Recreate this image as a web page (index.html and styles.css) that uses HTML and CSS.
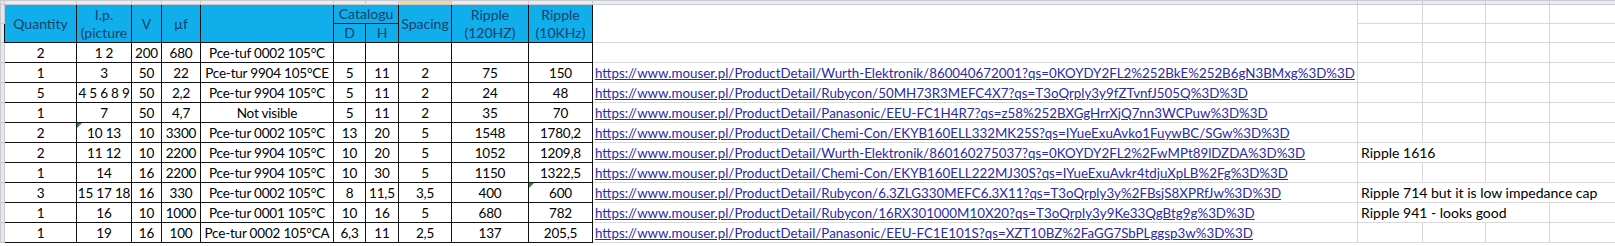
FILE: index.html
```html
<!DOCTYPE html>
<html>
<head>
<meta charset="utf-8">
<link rel="stylesheet" href="styles.css">
</head>
<body>
<table class="sheet">
<colgroup>
<col class="w-g"><col class="w-q"><col class="w-ip"><col class="w-v"><col class="w-uf"><col class="w-desc"><col class="w-d"><col class="w-h"><col class="w-sp"><col class="w-r1"><col class="w-r2"><col class="w-link"><col class="w-n1"><col class="w-n2"><col class="w-n3"><col class="w-n4">
</colgroup>
<tr class="r-top">
<td class="gut"></td><td class="ch"></td><td class="ch"></td><td class="ch"></td><td class="ch"></td><td class="ch"></td><td class="ch"></td><td class="ch"></td><td class="ch sel"></td><td class="ch"></td><td class="ch"></td><td class="ch"></td><td class="ch"></td><td class="ch"></td><td class="ch"></td><td class="ch"></td>
</tr>
<tr class="r-h">
<td class="gut"></td>
<td class="hd" rowspan="2">Quantity</td>
<td class="hd two" rowspan="2">I.p.<br>(picture</td>
<td class="hd" rowspan="2">V</td>
<td class="hd" rowspan="2">µf</td>
<td class="hd" rowspan="2"></td>
<td class="hd" colspan="2">Catalogu</td>
<td class="hd" rowspan="2">Spacing</td>
<td class="hd two" rowspan="2">Ripple<br>(120HZ)</td>
<td class="hd two" rowspan="2">Ripple<br>(10KHz)</td>
<td class="plain hl" rowspan="2"></td>
<td class="plain"></td><td class="plain"></td><td class="plain"></td><td class="plain"></td>
</tr>
<tr class="r-h">
<td class="gut"></td>
<td class="hd">D</td>
<td class="hd">H</td>
<td class="plain"></td><td class="plain"></td><td class="plain"></td><td class="plain"></td>
</tr>
<tr class="r">
<td class="gut"></td><td class="c">2</td><td class="c">1 2</td><td class="c">200</td><td class="c">680</td><td class="c">Pce-tuf 0002 105°C</td><td class="c"></td><td class="c"></td><td class="c"></td><td class="c"></td><td class="c"></td><td class="plain hl"></td><td class="plain"></td><td class="plain"></td><td class="plain"></td><td class="plain"></td>
</tr>
<tr class="r">
<td class="gut"></td><td class="c">1</td><td class="c">3</td><td class="c">50</td><td class="c">22</td><td class="c">Pce-tur 9904 105°CE</td><td class="c">5</td><td class="c">11</td><td class="c">2</td><td class="c">75</td><td class="c">150</td><td class="plain lk"><a href="#">https://www.mouser.pl/ProductDetail/Wurth-Elektronik/860040672001?qs=0KOYDY2FL2%252BkE%252B6gN3BMxg%3D%3D</a></td><td class="plain"></td><td class="plain"></td><td class="plain"></td><td class="plain"></td>
</tr>
<tr class="r">
<td class="gut"></td><td class="c">5</td><td class="c">4 5 6 8 9</td><td class="c">50</td><td class="c">2,2</td><td class="c">Pce-tur 9904 105°C</td><td class="c">5</td><td class="c">11</td><td class="c">2</td><td class="c">24</td><td class="c">48</td><td class="plain lk"><a href="#">https://www.mouser.pl/ProductDetail/Rubycon/50MH73R3MEFC4X7?qs=T3oQrply3y9fZTvnfJ505Q%3D%3D</a></td><td class="plain"></td><td class="plain"></td><td class="plain"></td><td class="plain"></td>
</tr>
<tr class="r">
<td class="gut"></td><td class="c">1</td><td class="c">7</td><td class="c">50</td><td class="c">4,7</td><td class="c">Not visible</td><td class="c">5</td><td class="c">11</td><td class="c">2</td><td class="c">35</td><td class="c">70</td><td class="plain lk"><a href="#">https://www.mouser.pl/ProductDetail/Panasonic/EEU-FC1H4R7?qs=z58%252BXGgHrrXjQ7nn3WCPuw%3D%3D</a></td><td class="plain"></td><td class="plain"></td><td class="plain"></td><td class="plain"></td>
</tr>
<tr class="r">
<td class="gut"></td><td class="c">2</td><td class="c tri">10 13</td><td class="c">10</td><td class="c">3300</td><td class="c">Pce-tur 0002 105°C</td><td class="c">13</td><td class="c">20</td><td class="c">5</td><td class="c">1548</td><td class="c">1780,2</td><td class="plain lk"><a href="#">https://www.mouser.pl/ProductDetail/Chemi-Con/EKYB160ELL332MK25S?qs=IYueExuAvko1FuywBC/SGw%3D%3D</a></td><td class="plain"></td><td class="plain"></td><td class="plain"></td><td class="plain"></td>
</tr>
<tr class="r">
<td class="gut"></td><td class="c">2</td><td class="c">11 12</td><td class="c">10</td><td class="c">2200</td><td class="c">Pce-tur 9904 105°C</td><td class="c">10</td><td class="c">20</td><td class="c">5</td><td class="c">1052</td><td class="c">1209,8</td><td class="plain lk"><a href="#">https://www.mouser.pl/ProductDetail/Wurth-Elektronik/860160275037?qs=0KOYDY2FL2%2FwMPt89lDZDA%3D%3D</a></td><td class="plain note" colspan="2">Ripple 1616</td><td class="plain"></td><td class="plain"></td>
</tr>
<tr class="r">
<td class="gut"></td><td class="c">1</td><td class="c">14</td><td class="c">16</td><td class="c">2200</td><td class="c">Pce-tur 9904 105°C</td><td class="c">10</td><td class="c">30</td><td class="c">5</td><td class="c">1150</td><td class="c">1322,5</td><td class="plain lk"><a href="#">https://www.mouser.pl/ProductDetail/Chemi-Con/EKYB160ELL222MJ30S?qs=IYueExuAvkr4tdjuXpLB%2Fg%3D%3D</a></td><td class="plain"></td><td class="plain"></td><td class="plain"></td><td class="plain"></td>
</tr>
<tr class="r">
<td class="gut"></td><td class="c">3</td><td class="c">15 17 18</td><td class="c">16</td><td class="c">330</td><td class="c">Pce-tur 0002 105°C</td><td class="c">8</td><td class="c">11,5</td><td class="c">3,5</td><td class="c">400</td><td class="c tri">600</td><td class="plain lk"><a href="#">https://www.mouser.pl/ProductDetail/Rubycon/6.3ZLG330MEFC6.3X11?qs=T3oQrply3y%2FBsjS8XPRfJw%3D%3D</a></td><td class="plain note" colspan="4">Ripple 714 but it is low impedance cap</td>
</tr>
<tr class="r">
<td class="gut"></td><td class="c">1</td><td class="c">16</td><td class="c">10</td><td class="c">1000</td><td class="c">Pce-tur 0001 105°C</td><td class="c">10</td><td class="c">16</td><td class="c">5</td><td class="c">680</td><td class="c">782</td><td class="plain lk"><a href="#">https://www.mouser.pl/ProductDetail/Rubycon/16RX301000M10X20?qs=T3oQrply3y9Ke33QgBtg9g%3D%3D</a></td><td class="plain note" colspan="3">Ripple 941 - looks good</td><td class="plain"></td>
</tr>
<tr class="r">
<td class="gut"></td><td class="c">1</td><td class="c">19</td><td class="c">16</td><td class="c">100</td><td class="c">Pce-tur 0002 105°CA</td><td class="c">6,3</td><td class="c">11</td><td class="c">2,5</td><td class="c">137</td><td class="c">205,5</td><td class="plain lk"><a href="#">https://www.mouser.pl/ProductDetail/Panasonic/EEU-FC1E101S?qs=XZT10BZ%2FaGG7SbPLggsp3w%3D%3D</a></td><td class="plain"></td><td class="plain"></td><td class="plain"></td><td class="plain"></td>
</tr>
</table>
</body>
</html>
```
FILE: styles.css
```css
html, body {
  margin: 0;
  padding: 0;
  background: #ffffff;
}
body {
  width: 1615px;
  height: 246px;
  overflow: hidden;
  font-family: Lato, "Liberation Sans", sans-serif;
  font-size: 14px;
  color: #000;
}
.sheet {
  border-collapse: collapse;
  table-layout: fixed;
  width: 1615px;
}
.w-g { width: 4px; }
.w-q { width: 72px; }
.w-ip { width: 55px; }
.w-v { width: 30px; }
.w-uf { width: 39px; }
.w-desc { width: 133px; }
.w-d { width: 32px; }
.w-h { width: 33px; }
.w-sp { width: 53px; }
.w-r1 { width: 77px; }
.w-r2 { width: 64px; }
.w-link { width: 765px; }
.w-n1 { width: 65px; }
.w-n2 { width: 63px; }
.w-n3 { width: 64px; }
.w-n4 { width: 66px; }

td {
  padding: 0 2px;
  white-space: nowrap;
  overflow: hidden;
  vertical-align: middle;
  border: 1px solid #d8d8d8;
  line-height: 18px;
}
.r-top td { height: 3px; padding: 0; line-height: 0; }
.r-h td { height: 18px; }
.r td { height: 19px; }

.gut {
  background: #e4e7eb;
  border-color: #c6c9cd;
  padding: 0;
}
.ch {
  background: #e9ecf0;
  border-color: #c8ccd0;
}
.ch.sel { background: #f3dc8c; }

.hd {
  background: #10aeea;
  color: #16406a;
  text-align: center;
  border: 1px solid #111;
  padding: 0;
  font-size: 14px;
}
.hd.two { line-height: 18px; }

.c {
  text-align: center;
  border: 1px solid #111;
  padding: 0;
  position: relative;
  font-size: 13.5px;
  letter-spacing: -0.2px;
}
.tri::before {
  content: "";
  position: absolute;
  left: 0;
  top: 0;
  border-top: 5px solid #2a8a2a;
  border-right: 5px solid transparent;
}

.plain { background: #fff; }
.hl { border-left: 1px solid #111; }
.lk {
  border-left: 1px solid #111;
  padding-left: 2px;
  font-size: 13.35px;
}
.lk a {
  color: #2a2aa8;
  text-decoration: underline;
}
.note {
  padding-left: 3px;
  overflow: visible;
  font-size: 14px;
}
```
